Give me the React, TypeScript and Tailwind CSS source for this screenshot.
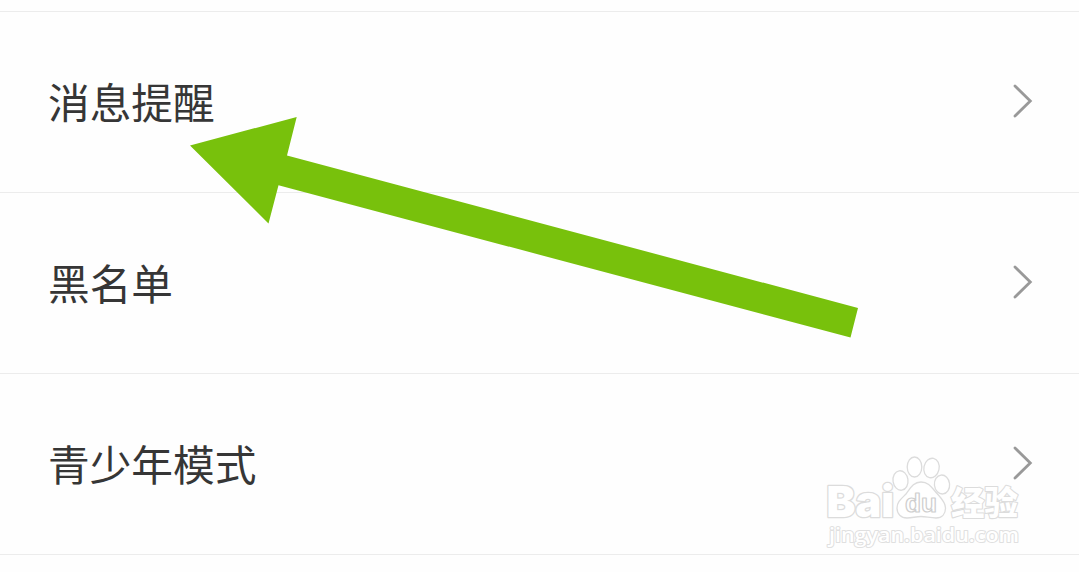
const items = ["消息提醒", "黑名单", "青少年模式"];

function Chevron() {
  return (
    <svg width="22" height="36" viewBox="0 0 22 36" fill="none" className="mb-0.5 shrink-0">
      <path d="M4 3 L19.3 18 L4 33" stroke="#999999" strokeWidth="2.8" strokeLinecap="round" strokeLinejoin="miter" />
    </svg>
  );
}

function Arrow() {
  return (
    <svg width="1079" height="572" viewBox="0 0 1079 572" className="pointer-events-none absolute left-0 top-0">
      <path d="M190 145.500 L296.700 117 L287 155.500 L858 308 L850.500 337.500 L278.500 185.300 L268.500 223.500 Z" fill="#78c10c" />
    </svg>
  );
}

function Watermark() {
  return (
    <svg
      width="210"
      height="100"
      viewBox="820 452 210 100"
      className="pointer-events-none absolute left-[820px] top-[452px]"
      fill="#ffffff"
      stroke="#dcdcdc"
      strokeWidth="1.3"
      strokeLinejoin="round"
    >
      <g className="font-['Inter',sans-serif] font-black" paintOrder="stroke" strokeWidth="2.600">
        <text x="826.500" y="516.500" fontSize="43" textLength="67.500" lengthAdjust="spacingAndGlyphs">Bai</text>
      </g>
      <ellipse cx="900.500" cy="480.500" rx="7.500" ry="9.800" transform="rotate(-8 900.500 480.500)" />
      <ellipse cx="914.500" cy="467" rx="7.300" ry="10" />
      <ellipse cx="931.500" cy="468" rx="7.600" ry="9.800" transform="rotate(12 931.500 468)" />
      <ellipse cx="942" cy="484.500" rx="7.600" ry="9.500" transform="rotate(-6 942 484.500)" />
      <path d="M921 482 C913 482 910 489 906 494 C901 499 897 502 897 508 C897 514 901 518 907 518 C912 518 916 516.500 921 516.500 C926 516.500 930 518 936 518 C942 518 945.500 514 945.500 508 C945.500 502 941 498 937 493.500 C932 488 929 482 921 482 Z" />
      <g className="font-['Liberation_Sans',sans-serif] font-bold" strokeWidth="1.2" stroke="#cfcfcf">
        <text x="905" y="512" fontSize="25" textLength="32" lengthAdjust="spacingAndGlyphs">du</text>
      </g>
      <g className="font-['Noto_Sans_CJK_SC',sans-serif] font-black" paintOrder="stroke" strokeWidth="2.200">
        <text x="951" y="514.500" fontSize="33.500" textLength="67" lengthAdjust="spacingAndGlyphs">经验</text>
      </g>
      <g className="font-['Open_Sans',sans-serif] font-semibold" paintOrder="stroke" strokeWidth="2" stroke="#e0e0e0">
        <text x="829" y="541.500" fontSize="20.500" textLength="190" lengthAdjust="spacingAndGlyphs">jingyan.baidu.com</text>
      </g>
    </svg>
  );
}

export default function App() {
  return (
    <div className="relative h-[572px] w-[1079px] overflow-hidden bg-[#fefefe] pt-[11px] font-['Noto_Sans_CJK_SC',sans-serif]">
      <ul className="border-t border-[#ececec]">
        {items.map((label) => (
          <li key={label} className="flex h-[181px] items-center justify-between border-b border-[#ececec] pl-12 pr-[46px]">
            <span className="pb-px text-[41.7px] leading-none text-[#363636]">{label}</span>
            <Chevron />
          </li>
        ))}
      </ul>
      <Arrow />
      <Watermark />
    </div>
  );
}
